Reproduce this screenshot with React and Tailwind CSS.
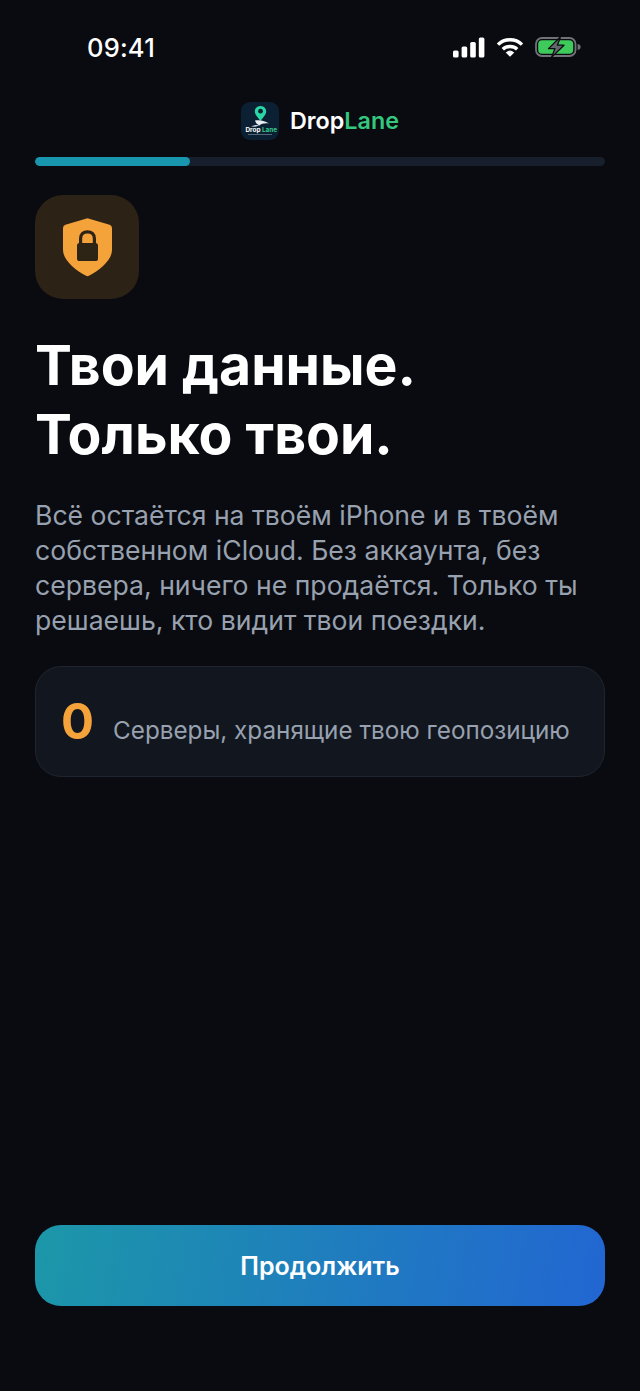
import React from "react";

const Signal = () => (
  <svg width="32" height="21" viewBox="0 0 32 21" fill="#fff" className="block">
    <rect x="0" y="13.5" width="5.6" height="7" rx="1.6" />
    <rect x="8.6" y="9.5" width="5.6" height="11" rx="1.6" />
    <rect x="17.2" y="5" width="5.6" height="15.5" rx="1.6" />
    <rect x="25.8" y="0.5" width="5.6" height="20" rx="1.6" />
  </svg>
);

const Wifi = () => (
  <svg width="28" height="20" viewBox="0 0 28 20" fill="none" stroke="#fff" strokeWidth="3.4" className="block">
    <path d="M2 7.6 C8.4 1.2 19.6 1.2 26 7.6" />
    <path d="M6.8 12.2 C10.6 8.6 17.4 8.6 21.2 12.2" />
    <path d="M10.6 15.6 L14 19 L17.4 15.6 C15.4 14 12.6 14 10.6 15.6 Z" fill="#fff" strokeWidth="1.2" />
  </svg>
);

const Battery = () => (
  <svg width="46" height="22" viewBox="0 0 46 22" fill="none" className="block">
    <rect x="1" y="2" width="39.5" height="18" rx="6" stroke="#6f7378" strokeWidth="1.8" />
    <rect x="3.2" y="4.2" width="35" height="13.6" rx="4" fill="#3ecb5c" />
    <path d="M42.6 8 C44.8 8.4 45.6 9.5 45.6 11 C45.6 12.5 44.8 13.6 42.6 14 Z" fill="#6f7378" />
    <path d="M25.5 0.8 L13.5 12.6 H20 L16.5 21.4 L29 9.2 H22.4 Z" fill="#63676b" stroke="#0a0c11" strokeWidth="1.3" strokeLinejoin="round" />
  </svg>
);

const Logo = () => (
  <div className="w-[38px] h-[38px] rounded-[9px] bg-[#0b2033] overflow-hidden shrink-0">
    <svg width="38" height="38" viewBox="0 0 38 38" className="block">
      <path d="M19.5 4 C15.8 4 13.8 6.8 13.8 9.4 C13.8 12.4 17 15.4 19.5 18.8 C22 15.4 25.2 12.4 25.2 9.4 C25.2 6.8 23.2 4 19.5 4 Z" fill="#2bd6a6" />
      <circle cx="19.5" cy="9.2" r="2.4" fill="#0b2033" />
      <path d="M14 18.5 C19 17.5 24.5 19 28 21.5 C24 21 20 21.6 18.5 23.5 C16 22.5 14.5 20.5 14 18.5 Z" fill="#e8eef2" />
      <path d="M10 24.5 C13 22.8 16 22.4 18.5 23.5 L14 24.8 Z" fill="#cfd8dd" />
      <text x="4.5" y="29.8" fontSize="6.4" fontWeight="700" fontFamily="Inter, sans-serif" fill="#fff">Drop</text>
      <text x="21" y="29.8" fontSize="6.4" fontWeight="700" fontFamily="Inter, sans-serif" fill="#35c98a">Lane</text>
      <rect x="7" y="32" width="24" height="1" fill="#6f8494" opacity="0.7" />
    </svg>
  </div>
);

const ShieldLock = () => (
  <svg width="49" height="59" viewBox="0 0 49 59" className="block">
    <path
      d="M24.5 0.3 L46.6 6.8 Q49 7.6 49 10 V32 C49 42 37 52 26 57.8 Q24.5 58.6 23 57.8 C12 52 0 42 0 32 V10 Q0 7.6 2.4 6.8 Z"
      fill="#f4a23a"
    />
    <rect x="14" y="25" width="21" height="18" rx="2.6" fill="#2e2415" />
    <path d="M17.6 26 V20.5 C17.6 16 20.5 13.8 24.5 13.8 C28.5 13.8 31.4 16 31.4 20.5 V26" fill="none" stroke="#2e2415" strokeWidth="3.2" />
  </svg>
);

export default function App() {
  return (
    <div className="w-[640px] h-[1391px] bg-[#090b10] flex flex-col font-['Inter',sans-serif] overflow-hidden">
      <div className="h-[95px] pt-[32px] pl-[87px] pr-[59px] flex justify-between items-start">
        <span className="text-[25.5px] leading-[31px] font-medium text-white tracking-[0.2px]">09:41</span>
        <div className="flex items-center pt-[4px]">
          <Signal />
          <div className="ml-[11px]"><Wifi /></div>
          <div className="ml-[11px]"><Battery /></div>
        </div>
      </div>
      <div className="h-[52px] flex items-center justify-center gap-[11px]">
        <Logo />
        <span className="text-[23.3px] leading-[28px] font-semibold text-white">
          Drop<span className="text-[#35c77e]">Lane</span>
        </span>
      </div>
      <div className="mx-[35px] mt-[10px] h-[9px] rounded-full bg-[#171e2c] overflow-hidden shrink-0">
        <div className="h-full w-[155px] rounded-full bg-[#1896ae]" />
      </div>
      <div className="flex-1 flex flex-col px-[35px] pt-[29px]">
        <div className="w-[104px] h-[104px] rounded-[28px] bg-[#2c2216] flex items-center justify-center">
          <ShieldLock />
        </div>
        <h1 className="mt-[31px] text-[55.3px] leading-[69px] font-bold text-white">
          Твои данные.
          <br />
          Только твои.
        </h1>
        <p className="mt-[30px] text-[26.6px] leading-[35px] text-[#98a1af]">
          Всё остаётся на твоём iPhone и в твоём
          <br />
          собственном iCloud. Без аккаунта, без
          <br />
          сервера, ничего не продаётся. Только ты
          <br />
          решаешь, кто видит твои поездки.
        </p>
        <div className="mt-[28px] h-[111px] rounded-[26px] bg-[#12171f] border border-[#1f2530] flex items-center pl-[25px] gap-[19px]">
          <span className="text-[49px] leading-[56px] font-bold text-[#f4a23a]">0</span>
          <span className="text-[24.25px] leading-[32px] text-[#98a1af] pt-[18px]">Серверы, хранящие твою геопозицию</span>
        </div>
      </div>
      <div className="px-[35px] pb-[85px]">
        <button className="w-full h-[81px] pt-[2px] rounded-[26px] bg-[linear-gradient(100deg,#1c97a8,#2266d2)] text-white text-[25px] font-semibold">
          Продолжить
        </button>
      </div>
    </div>
  );
}
